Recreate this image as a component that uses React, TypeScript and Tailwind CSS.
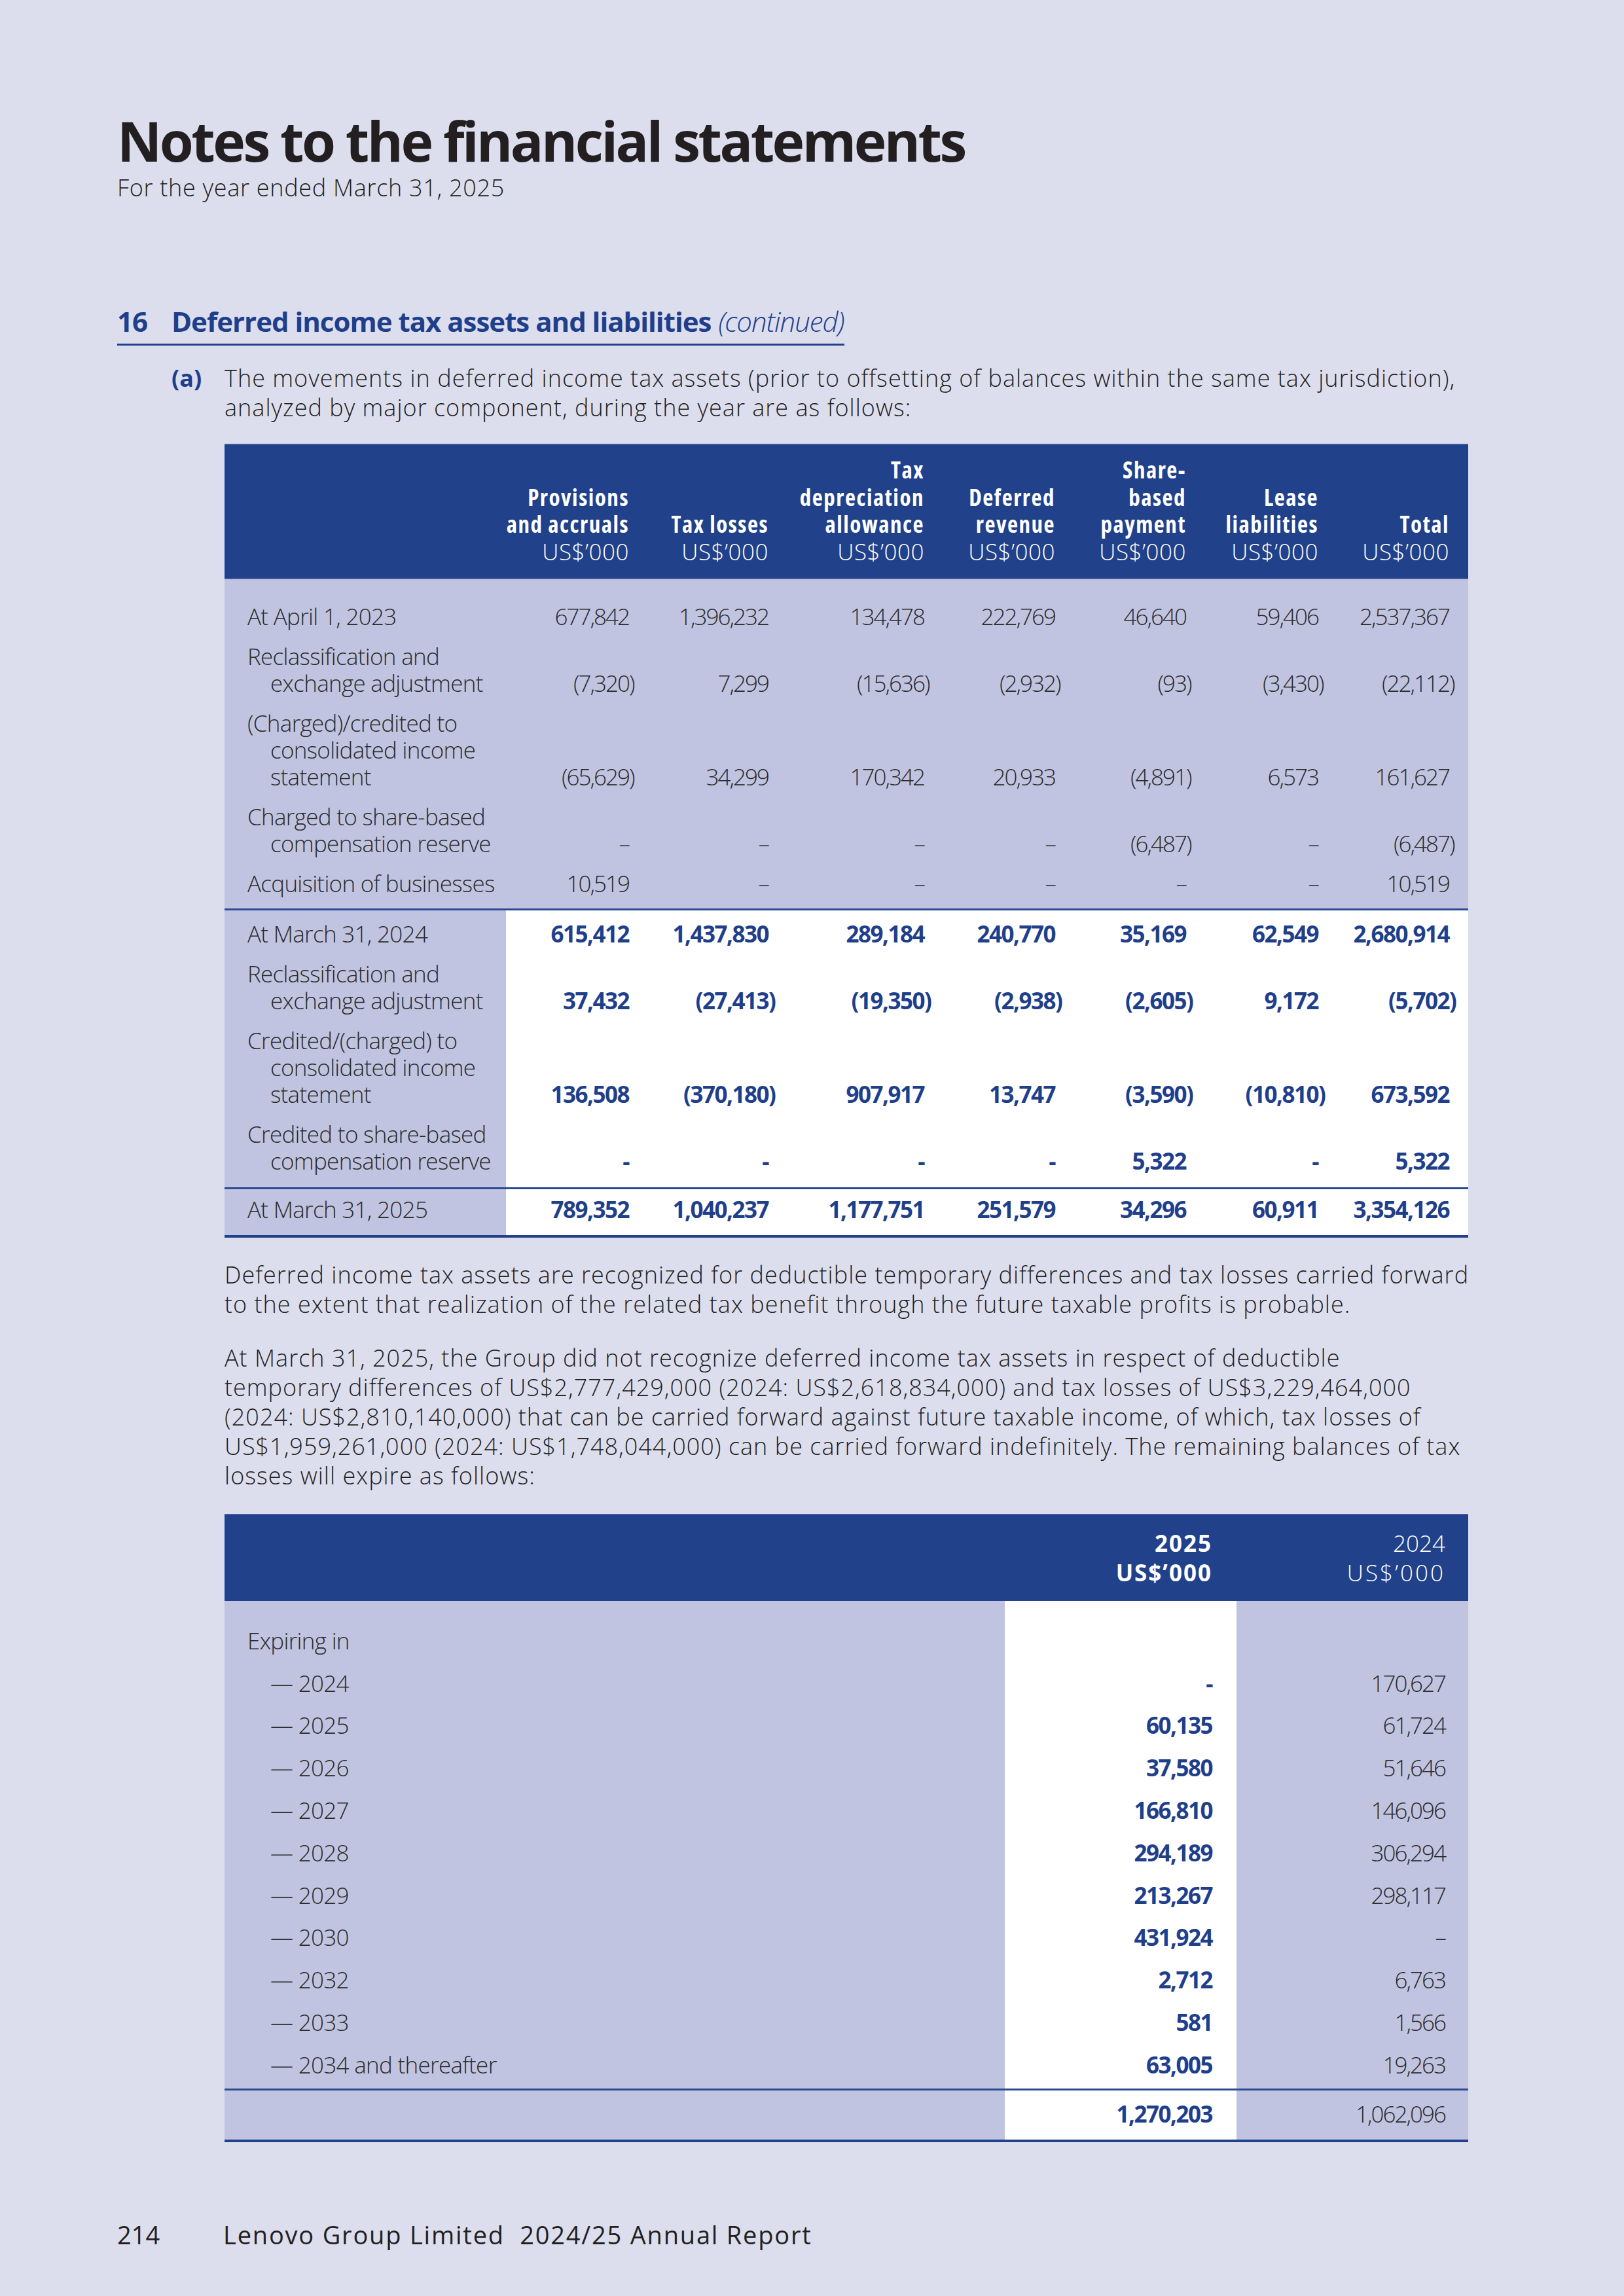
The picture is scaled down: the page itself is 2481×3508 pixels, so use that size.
import React from "react";

// movements table: label + 7 value columns + right gutter
const grid1 =
  "grid grid-cols-[430px_188px_213px_238px_200px_200px_202px_200px_29px]";
const grid2 = "grid grid-cols-[1192px_354px_354px]";

// only normal and condensed Open Sans widths are on this machine
const labelFont = "font-light tracking-[-0.7px]";
const numLight = "font-light tracking-[-2px]";
const numBold = "font-bold tracking-[-1.5px]";

type Row = { label: string[]; vals: string[] };

const openingRows: Row[] = [
  {
    label: ["At April 1, 2023"],
    vals: ["677,842", "1,396,232", "134,478", "222,769", "46,640", "59,406", "2,537,367"],
  },
  {
    label: ["Reclassification and", "exchange adjustment"],
    vals: ["(7,320)", "7,299", "(15,636)", "(2,932)", "(93)", "(3,430)", "(22,112)"],
  },
  {
    label: ["(Charged)/credited to", "consolidated income", "statement"],
    vals: ["(65,629)", "34,299", "170,342", "20,933", "(4,891)", "6,573", "161,627"],
  },
  {
    label: ["Charged to share-based", "compensation reserve"],
    vals: ["–", "–", "–", "–", "(6,487)", "–", "(6,487)"],
  },
  {
    label: ["Acquisition of businesses"],
    vals: ["10,519", "–", "–", "–", "–", "–", "10,519"],
  },
];

const currentRows: Row[] = [
  {
    label: ["At March 31, 2024"],
    vals: ["615,412", "1,437,830", "289,184", "240,770", "35,169", "62,549", "2,680,914"],
  },
  {
    label: ["Reclassification and", "exchange adjustment"],
    vals: ["37,432", "(27,413)", "(19,350)", "(2,938)", "(2,605)", "9,172", "(5,702)"],
  },
  {
    label: ["Credited/(charged) to", "consolidated income", "statement"],
    vals: ["136,508", "(370,180)", "907,917", "13,747", "(3,590)", "(10,810)", "673,592"],
  },
  {
    label: ["Credited to share-based", "compensation reserve"],
    vals: ["-", "-", "-", "-", "5,322", "-", "5,322"],
  },
];

const closingRow: Row = {
  label: ["At March 31, 2025"],
  vals: ["789,352", "1,040,237", "1,177,751", "251,579", "34,296", "60,911", "3,354,126"],
};

const headers = [
  ["Provisions", "and accruals"],
  ["Tax losses"],
  ["Tax", "depreciation", "allowance"],
  ["Deferred", "revenue"],
  ["Share-", "based", "payment"],
  ["Lease", "liabilities"],
  ["Total"],
];

const expiring: [string, string, string][] = [
  ["— 2024", "-", "170,627"],
  ["— 2025", "60,135", "61,724"],
  ["— 2026", "37,580", "51,646"],
  ["— 2027", "166,810", "146,096"],
  ["— 2028", "294,189", "306,294"],
  ["— 2029", "213,267", "298,117"],
  ["— 2030", "431,924", "–"],
  ["— 2032", "2,712", "6,763"],
  ["— 2033", "581", "1,566"],
  ["— 2034 and thereafter", "63,005", "19,263"],
];

// closing bracket hangs outside the column edge
function Num({ v }: { v: string }) {
  if (v.startsWith("(") && v.endsWith(")")) {
    return (
      <span>
        {v.slice(0, -1)}
        <span className="inline-block w-0">)</span>
      </span>
    );
  }
  return <span>{v}</span>;
}

function Label({ lines }: { lines: string[] }) {
  return (
    <div className={`whitespace-nowrap ${labelFont}`}>
      {lines.map((l, i) => (
        <div key={i} className={i > 0 ? "pl-[35px]" : ""}>
          {l}
        </div>
      ))}
    </div>
  );
}

function MoveRow({ row, pad, bold }: { row: Row; pad: string; bold?: boolean }) {
  return (
    <div className={grid1}>
      <div className={`bg-[#c0c4e0] pl-[35px] text-[#2b2b2b] ${pad}`}>
        <Label lines={row.label} />
      </div>
      {row.vals.map((v, i) => (
        <div
          key={i}
          className={`flex items-end justify-end whitespace-nowrap ${pad} ${
            bold ? `${numBold} text-[#1f3f8a]` : `${numLight} text-[#2b2b2b]`
          }`}
        >
          <Num v={v} />
        </div>
      ))}
      <div className={pad} />
    </div>
  );
}

function MovementsTable() {
  return (
    <div className="w-[1900px] text-[35px] leading-[41px]">
      {/* header */}
      <div className={`${grid1} bg-[#21428a] border-t-2 border-b-2 border-[#3d5a9d] text-white pt-[17px] pb-[20px] leading-[41.5px]`}>
        <div />
        {headers.map((h, i) => (
          <div key={i} className="flex flex-col justify-end items-end text-right whitespace-nowrap">
            {h.map((l) => (
              <div key={l} className="font-bold [font-stretch:75%] tracking-[1.5px]">
                {l}
              </div>
            ))}
            <div className="font-light tracking-[0.5px]">US$’000</div>
          </div>
        ))}
        <div />
      </div>

      {/* opening balances */}
      <div className="bg-[#c0c4e0]">
        {openingRows.map((r, i) => (
          <MoveRow
            key={i}
            row={r}
            pad={
              i === 0
                ? "pt-[36px] pb-[10px]"
                : i === openingRows.length - 1
                ? "pt-[10px] pb-[18px]"
                : "py-[10px]"
            }
          />
        ))}
      </div>
      <div className="h-[3px] bg-[#2a4a94]" />

      {/* current year */}
      <div className="bg-white">
        {currentRows.map((r, i) => (
          <MoveRow
            key={i}
            row={r}
            bold
            pad={
              i === 0
                ? "pt-[15px] pb-[10px]"
                : i === currentRows.length - 1
                ? "pt-[10px] pb-[20px]"
                : "py-[10px]"
            }
          />
        ))}
      </div>
      <div className="h-[3px] bg-[#2a4a94]" />
      <div className="bg-white">
        <MoveRow row={closingRow} bold pad="pt-[10px] pb-[19px]" />
      </div>
      <div className="h-[4px] bg-[#21428a]" />
    </div>
  );
}

function ExpiryTable() {
  return (
    <div className="w-[1900px] text-[35px] leading-[41px]">
      <div className={`${grid2} bg-[#21428a] border-t-2 border-[#3d5a9d] text-white pt-[20px] pb-[21px] leading-[45px]`}>
        <div />
        <div className="text-right pr-[37px] font-bold tracking-[2px]">
          <div>2025</div>
          <div>US$’000</div>
        </div>
        <div className="text-right pr-[35px] font-light">
          <div>2024</div>
          <div className="tracking-[3px]">US$’000</div>
        </div>
      </div>

      <div className={grid2}>
        <div className="bg-[#c0c4e0] h-[28px]" />
        <div className="bg-white" />
        <div className="bg-[#c0c4e0]" />
      </div>

      <div className={grid2}>
        <div className={`bg-[#c0c4e0] py-[11.9px] pl-[35px] text-[#2b2b2b] ${labelFont}`}>
          Expiring in
        </div>
        <div className="bg-white" />
        <div className="bg-[#c0c4e0]" />
      </div>

      {expiring.map(([y, a, b]) => (
        <div key={y} className={grid2}>
          <div className={`bg-[#c0c4e0] py-[11.9px] pl-[70px] text-[#2b2b2b] ${labelFont}`}>
            {y}
          </div>
          <div className={`bg-white py-[11.9px] pr-[37px] text-right text-[#1f3f8a] ${numBold}`}>
            {a}
          </div>
          <div className={`bg-[#c0c4e0] py-[11.9px] pr-[35px] text-right text-[#2b2b2b] ${numLight}`}>
            {b}
          </div>
        </div>
      ))}

      <div className={grid2}>
        <div className="bg-[#c0c4e0] h-[4px]" />
        <div className="bg-white" />
        <div className="bg-[#c0c4e0]" />
      </div>
      <div className="h-[3px] bg-[#2a4a94]" />
      <div className={grid2}>
        <div className="bg-[#c0c4e0] pt-[15px] pb-[19px]" />
        <div className={`bg-white pt-[15px] pb-[19px] pr-[37px] text-right text-[#1f3f8a] ${numBold}`}>
          1,270,203
        </div>
        <div className={`bg-[#c0c4e0] pt-[15px] pb-[19px] pr-[35px] text-right text-[#2b2b2b] ${numLight}`}>
          1,062,096
        </div>
      </div>
      <div className="h-[4px] bg-[#21428a]" />
    </div>
  );
}

export default function App() {
  return (
    <div className="w-[2481px] h-[3508px] bg-[#dcdeee] flex flex-col pl-[179px] pt-[170px] pb-[72px] font-['Open_Sans',sans-serif] text-[#231f20]">
      <h1 className="text-[84px] leading-[90px] font-bold tracking-[-3.5px]">
        Notes to the financial statements
      </h1>
      <p className="mt-[5px] text-[36px] leading-[43px] font-light tracking-[0.7px]">
        For the year ended March 31, 2025
      </p>

      <div className="mt-[158px] self-start border-b-[3px] border-[#21428a] pb-[9px] text-[42px] leading-[50px] text-[#1f3f8a] flex whitespace-nowrap tracking-[-1px]">
        <span className="w-[83px] font-bold">16</span>
        <span className="font-bold">Deferred income tax assets and liabilities</span>
        <span className="ml-[11px] italic font-light">(continued)</span>
      </div>

      <div className="mt-[27px] pl-[83px] flex text-[36px] leading-[45px] tracking-[1px]">
        <span className="w-[81px] font-bold text-[#1f3f8a] tracking-normal">(a)</span>
        <p className="font-light whitespace-nowrap">
          The movements in deferred income tax assets (prior to offsetting of balances within the same tax jurisdiction),
          <br />
          analyzed by major component, during the year are as follows:
        </p>
      </div>

      <div className="pl-[164px]">
        <div className="mt-[33px]">
          <MovementsTable />
        </div>

        <p className="mt-[34px] text-[36px] leading-[45px] font-light whitespace-nowrap tracking-[1px]">
          Deferred income tax assets are recognized for deductible temporary differences and tax losses carried forward
          <br />
          to the extent that realization of the related tax benefit through the future taxable profits is probable.
        </p>
        <p className="mt-[37px] text-[36px] leading-[45px] font-light whitespace-nowrap tracking-[1px]">
          At March 31, 2025, the Group did not recognize deferred income tax assets in respect of deductible
          <br />
          temporary differences of US$2,777,429,000 (2024: US$2,618,834,000) and tax losses of US$3,229,464,000
          <br />
          (2024: US$2,810,140,000) that can be carried forward against future taxable income, of which, tax losses of
          <br />
          US$1,959,261,000 (2024: US$1,748,044,000) can be carried forward indefinitely. The remaining balances of tax
          <br />
          losses will expire as follows:
        </p>

        <div className="mt-[36px]">
          <ExpiryTable />
        </div>
      </div>

      <div className="mt-auto flex text-[38px] leading-[43px] font-normal">
        <span className="w-[162px]">214</span>
        <span className="whitespace-pre tracking-[1.8px]">Lenovo Group Limited  2024/25 Annual Report</span>
      </div>
    </div>
  );
}
